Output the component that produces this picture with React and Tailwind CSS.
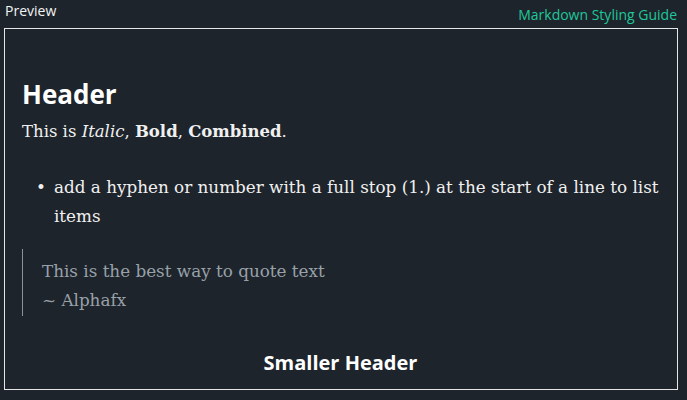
export default function App() {
  const sans = { fontFamily: '"Open Sans", "Noto Sans", sans-serif' };
  const serif = { fontFamily: '"DejaVu Serif", "Liberation Serif", serif' };
  return (
    <div className="w-[687px] h-[400px] bg-[#1e242b] text-white overflow-hidden flex flex-col">
      <div className="flex justify-between items-start h-[28px] pl-[5px] pr-[10px]" style={sans}>
        <span className="text-[14px] leading-[22px] text-[#f2f4f5]">Preview</span>
        <span className="text-[14px] leading-[30px] text-[#1fc79a]">Markdown Styling Guide</span>
      </div>
      <div className="mx-[4px] mr-[9px] h-[362px] border border-[#e6e6e6] pl-[17px] pr-[10px] pt-[48px]">
        <h1 className="text-[26px] font-bold leading-[34px] text-white" style={sans}>Header</h1>
        <p className="mt-[7px] text-[16.5px] leading-[28px] text-[#f0f0f0]" style={serif}>
          This is <em>Italic</em>, <span className="font-semibold">Bold</span>, <span className="font-semibold">Combined</span>.
        </p>
        <ul className="mt-[27px] pl-[14px] text-[16.8px] leading-[29px] text-[#f0f0f0]" style={serif}>
          <li className="flex">
            <span className="w-[18px] shrink-0">•</span>
            <span>add a hyphen or number with a full stop (1.) at the start of a line to list items</span>
          </li>
        </ul>
        <blockquote className="mt-[18px] border-l border-[#8a939b] pl-[19px] pt-[8px] pb-[1px] text-[16.8px] leading-[29px] text-[#98a1a9]" style={serif}>
          <div>This is the best way to quote text</div>
          <div>~ Alphafx</div>
        </blockquote>
        <h3 className="mt-[33px] pr-[8px] text-center text-[20px] font-bold leading-[28px] text-white" style={sans}>Smaller Header</h3>
      </div>
    </div>
  );
}
